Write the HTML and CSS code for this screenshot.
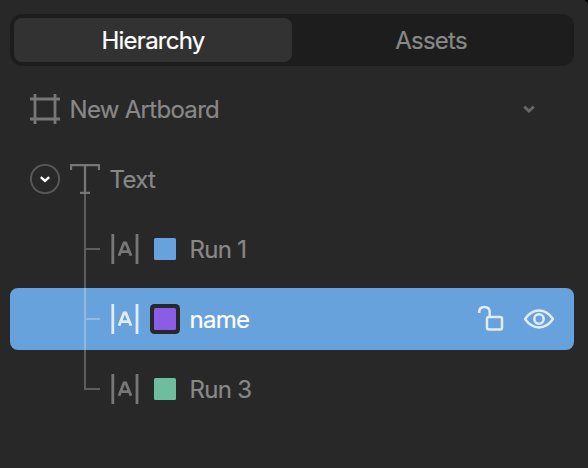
FILE: index.html
```
<!DOCTYPE html>
<html lang="en">
<head>
<meta charset="utf-8">
<title>Hierarchy</title>
<link rel="stylesheet" href="styles.css">
</head>
<body>
<main class="panel">
  <nav class="tabs">
    <button class="tab tab-active">Hierarchy</button>
    <button class="tab">Assets</button>
  </nav>
  <section class="tree">
    <div class="row">
      <svg class="icon" viewBox="0 0 30 30"><path d="M5 0V30M25 0V30M0 5H30M0 25H30"/></svg>
      <span class="label">New Artboard</span>
      <svg class="chevron" viewBox="0 0 14 10"><path d="M2.2 2.6L7 7L11.8 2.6"/></svg>
    </div>
    <div class="row">
      <svg class="icon toggle" viewBox="0 0 30 30"><circle cx="15" cy="15" r="14.1"/><path d="M10.8 13.2L15 16.9L19.2 13.2"/></svg>
      <svg class="icon type" viewBox="0 0 30 30"><path d="M1 6V1H29V6M15 1V29M10 29H20"/></svg>
      <span class="label">Text</span>
    </div>
    <div class="row run">
      <svg class="icon" viewBox="0 0 30 30"><path d="M2.8 0V30M27 0V30"/><path class="letter" d="M9 21.8L14 9H15.8L21 21.8M11 17.6H19"/></svg>
      <i class="swatch blue"></i>
      <span class="label">Run 1</span>
    </div>
    <div class="row run selected">
      <svg class="icon" viewBox="0 0 30 30"><path d="M2.8 0V30M27 0V30"/><path class="letter" d="M9 21.8L14 9H15.8L21 21.8M11 17.6H19"/></svg>
      <i class="swatch purple"></i>
      <span class="label">name</span>
      <svg class="icon action lock" viewBox="0 0 30 30"><path d="M4.2 9V8Q4.2 2.9 9.3 2.9Q14.7 2.9 14.7 8V13"/><rect x="12" y="13" width="15" height="12.4" rx="2"/></svg>
      <svg class="icon action" viewBox="0 0 30 30"><path d="M1 15Q7 6.6 15 6.6T29 15Q23 23.4 15 23.4T1 15Z"/><circle cx="15" cy="15" r="4.7"/></svg>
    </div>
    <div class="row run">
      <svg class="icon" viewBox="0 0 30 30"><path d="M2.8 0V30M27 0V30"/><path class="letter" d="M9 21.8L14 9H15.8L21 21.8M11 17.6H19"/></svg>
      <i class="swatch green"></i>
      <span class="label">Run 3</span>
    </div>
    <svg class="branches" viewBox="0 0 16 196"><path d="M1 0V195H16M2 55H16M2 125H16"/></svg>
  </section>
</main>
</body>
</html>
```
FILE: styles.css
```
* { box-sizing: border-box; }
html { background: #000; }
body {
  margin: 0;
  font-family: Inter, "Liberation Sans", sans-serif;
  font-size: 24px;
  color: #888;
  -webkit-text-stroke: 0.2px currentColor;
}
.panel {
  width: 588px;
  height: 468px;
  padding: 14px 14px 0 10px;
  background: #282828;
  border-top-right-radius: 5px;
  overflow: hidden;
}
.tabs {
  display: grid;
  grid-template-columns: 278px 1fr;
  height: 52px;
  padding: 4px;
  border-radius: 12px;
  background: #1d1d1d;
}
.tab {
  border: 0;
  padding: 0;
  border-radius: 8px;
  background: none;
  color: #888;
  font: inherit;
  letter-spacing: -0.75px;
}
.tab-active { background: #323232; color: #fff; }
.tree {
  position: relative;
  display: flex;
  flex-direction: column;
  gap: 8px;
  margin-top: 12px;
}
.row {
  display: flex;
  align-items: center;
  gap: 10px;
  height: 62px;
  padding: 0 20px;
  border-radius: 8px;
}
.run { padding-left: 100px; gap: 14px; }
.label { margin-left: -0.5px; white-space: nowrap; letter-spacing: -0.7px; }
.icon {
  width: 30px;
  height: 30px;
  flex: none;
  fill: none;
  stroke: #777;
  stroke-width: 2.8;
}
.type { stroke-width: 2.3; }
.toggle { stroke: #585858; stroke-width: 1.9; }
.toggle path { stroke: #fff; stroke-width: 2.4; }
.chevron {
  width: 14px;
  height: 10px;
  margin: 0 18px 0 auto;
  fill: none;
  stroke: #666;
  stroke-width: 2.8;
}
.swatch { width: 22px; height: 22px; flex: none; border-radius: 1.5px; }
.blue { background: #68a2dc; }
.purple { background: #8b5ce6; box-shadow: 0 0 0 4px #282828; }
.green { background: #6cbe9e; }
.selected { background: #68a2dc; color: #fff; }
.selected .icon { stroke: #e1ecf8; }
.selected .action { stroke-width: 2.5; }
.selected .lock { margin: 0 1.5px 0 auto; }
.selected .action + .action { margin-left: 4px; }
.branches {
  position: absolute;
  left: 74px;
  top: 116px;
  width: 16px;
  height: 196px;
  fill: none;
  stroke: #fff;
  stroke-opacity: 0.25;
  stroke-width: 2;
}
```
